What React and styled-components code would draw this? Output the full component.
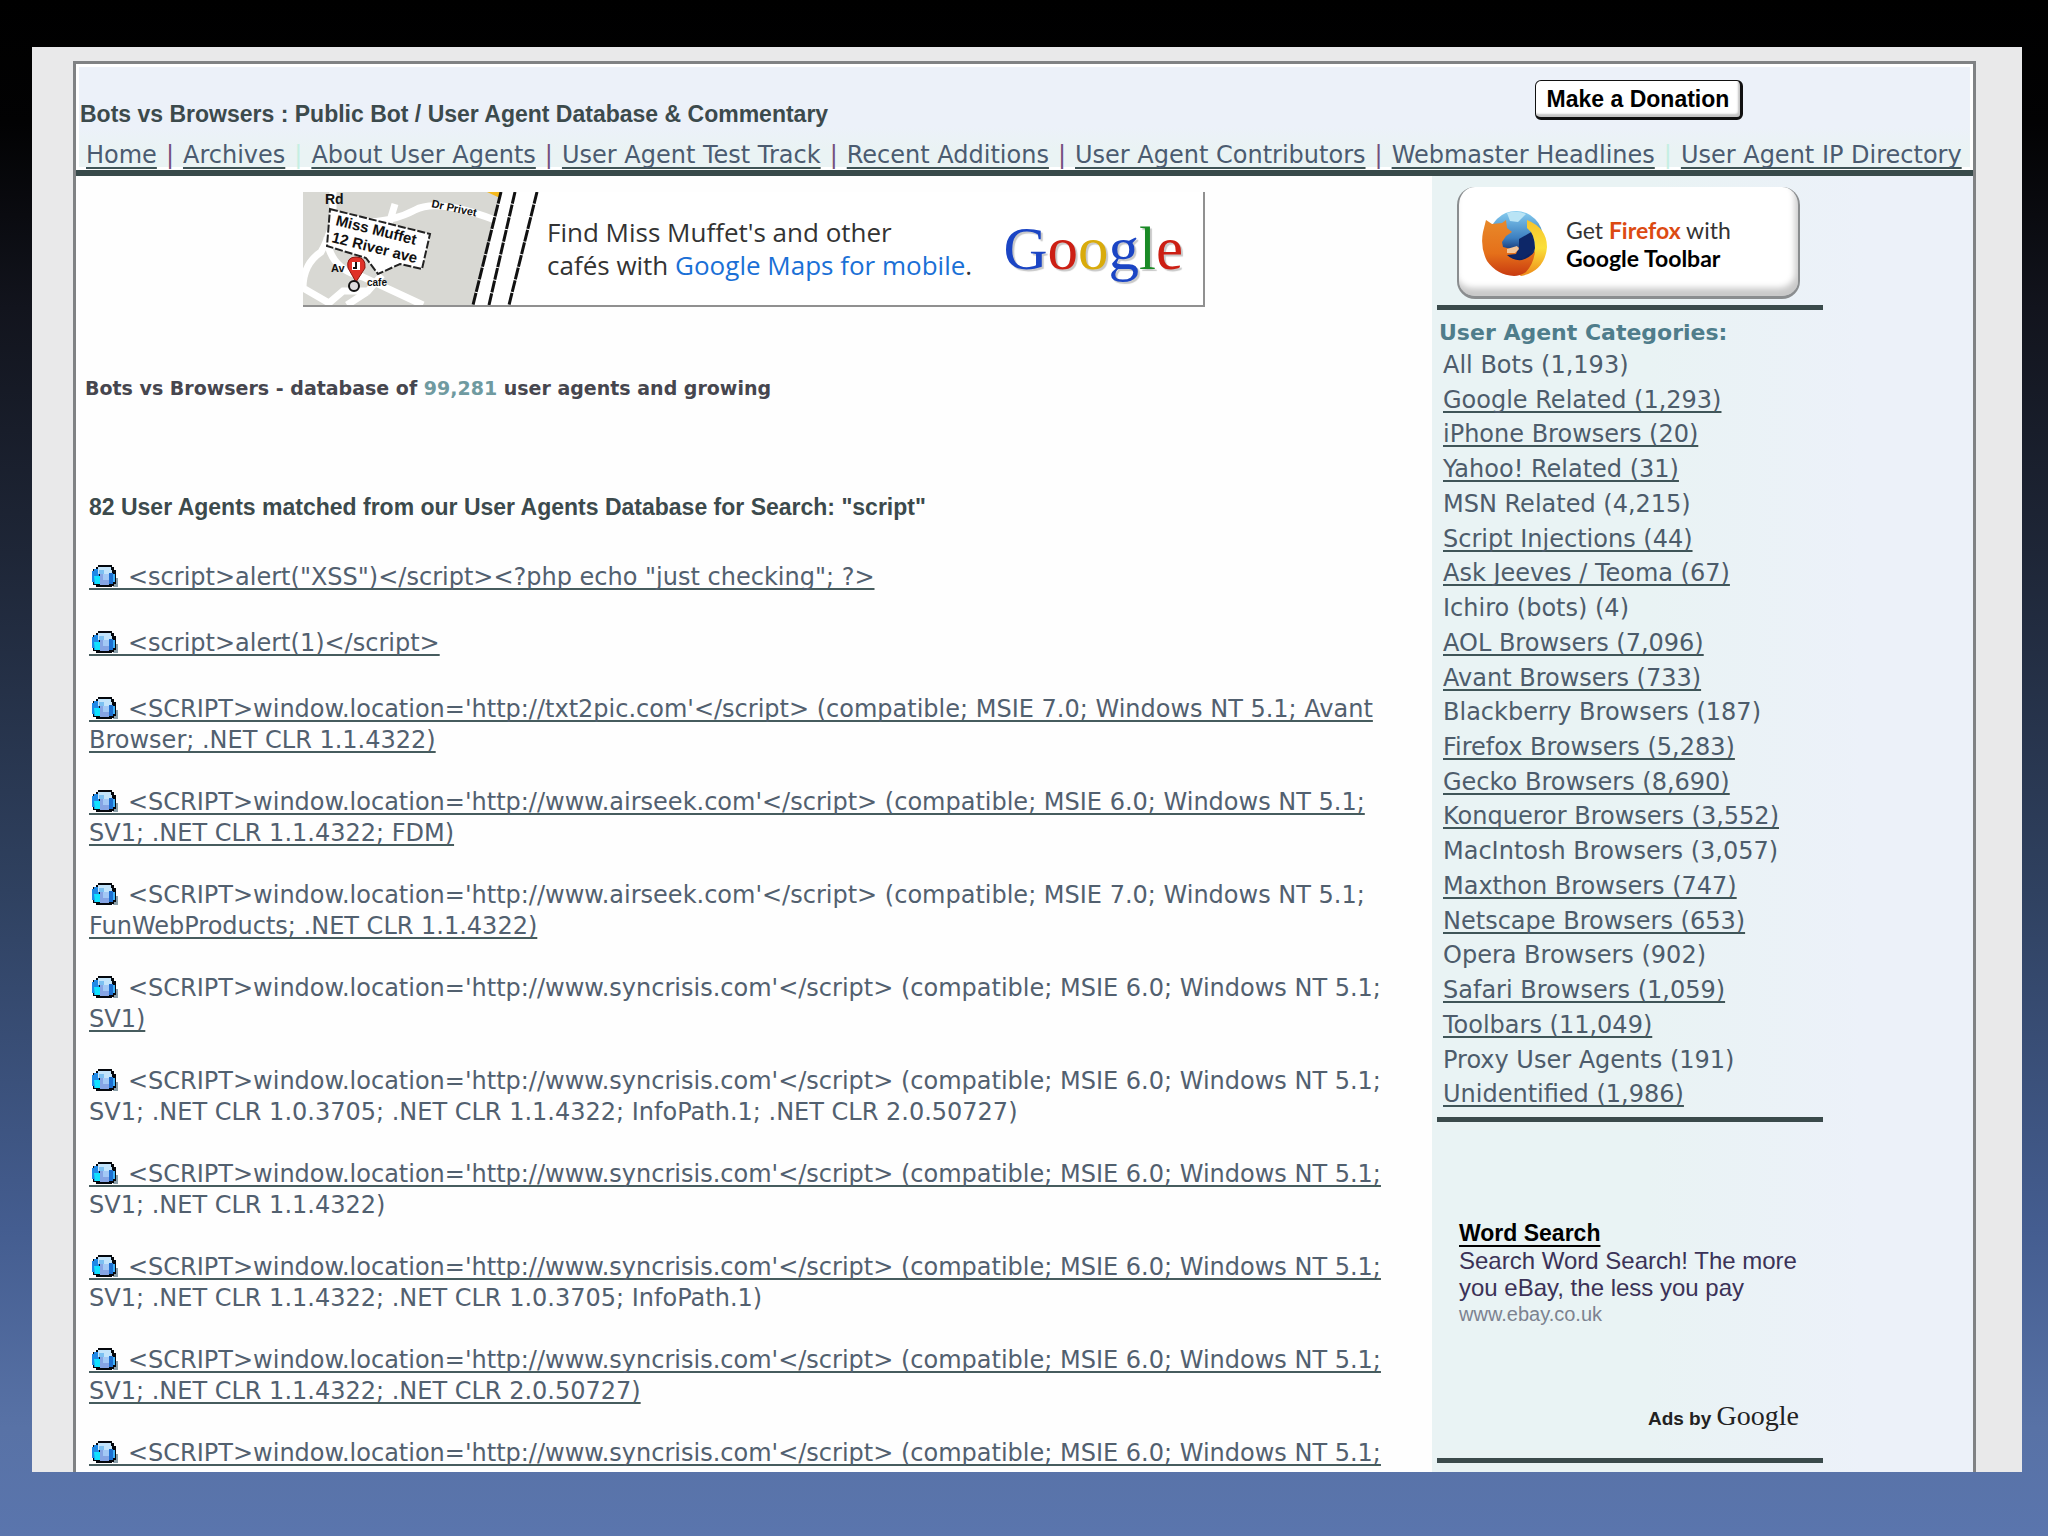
import React from 'react';
import styled, { createGlobalStyle } from 'styled-components';

const navLinks = [
	'Home',
	'Archives',
	'About User Agents',
	'User Agent Test Track',
	'Recent Additions',
	'User Agent Contributors',
	'Webmaster Headlines',
	'User Agent IP Directory',
];

const airseek =
	"<SCRIPT>window.location='http://www.airseek.com'</script> (compatible; MSIE ";
const syncrisis =
	"<SCRIPT>window.location='http://www.syncrisis.com'</script> (compatible; MSIE 6.0; Windows NT 5.1;";

// every entry is a list of lines: [text, underlined]
const agents = [
	[['<script>alert("XSS")</script><?php echo "just checking"; ?>', true]],
	[['<script>alert(1)</script>', true]],
	[
		[
			"<SCRIPT>window.location='http://txt2pic.com'</script> (compatible; MSIE 7.0; Windows NT 5.1; Avant",
			true,
		],
		['Browser; .NET CLR 1.1.4322)', true],
	],
	[
		[airseek + '6.0; Windows NT 5.1;', true],
		['SV1; .NET CLR 1.1.4322; FDM)', true],
	],
	[
		[airseek + '7.0; Windows NT 5.1;', false],
		['FunWebProducts; .NET CLR 1.1.4322)', true],
	],
	[
		[syncrisis, false],
		['SV1)', true],
	],
	[
		[syncrisis, false],
		[
			'SV1; .NET CLR 1.0.3705; .NET CLR 1.1.4322; InfoPath.1; .NET CLR 2.0.50727)',
			false,
		],
	],
	[
		[syncrisis, true],
		['SV1; .NET CLR 1.1.4322)', false],
	],
	[
		[syncrisis, true],
		['SV1; .NET CLR 1.1.4322; .NET CLR 1.0.3705; InfoPath.1)', false],
	],
	[
		[syncrisis, true],
		['SV1; .NET CLR 1.1.4322; .NET CLR 2.0.50727)', true],
	],
	[
		[syncrisis, true],
		['SV1; .NET CLR 1.1.4322; InfoPath.1)', true],
	],
];

const categories = [
	['All Bots (1,193)', false],
	['Google Related (1,293)', true],
	['iPhone Browsers (20)', true],
	['Yahoo! Related (31)', true],
	['MSN Related (4,215)', false],
	['Script Injections (44)', true],
	['Ask Jeeves / Teoma (67)', true],
	['Ichiro (bots) (4)', false],
	['AOL Browsers (7,096)', true],
	['Avant Browsers (733)', true],
	['Blackberry Browsers (187)', false],
	['Firefox Browsers (5,283)', true],
	['Gecko Browsers (8,690)', true],
	['Konqueror Browsers (3,552)', true],
	['MacIntosh Browsers (3,057)', false],
	['Maxthon Browsers (747)', true],
	['Netscape Browsers (653)', true],
	['Opera Browsers (902)', false],
	['Safari Browsers (1,059)', true],
	['Toolbars (11,049)', true],
	['Proxy User Agents (191)', false],
	['Unidentified (1,986)', true],
];

const GlobeIcon = ({ underlined }) => (
	<Globe
		viewBox="0 0 27 22"
		preserveAspectRatio="xMinYMin meet"
		aria-hidden="true"
		$underlined={underlined}
	>
		<path d="M25 13h2v9h-5z" fill="#8a9ea8" />
		<path d="M7 0h14v2h2v3h2v14h-2v2h-2v1H5v-2H2V4h3V2h2z" fill="#05080d" />
		<path d="M1 6h2V4h5v15H3v-2H1z" fill="#2089e6" />
		<path d="M3 11h6v8H4z" fill="#10e2ff" />
		<path d="M7 2h13v3h1v4H7z" fill="#c3e4fb" />
		<path d="M8 5h5v4H8z" fill="#7cc0f2" />
		<path d="M9 9h9v11H9z" fill="#86a4e4" />
		<path d="M12 9h6v6h-6z" fill="#a3c8f5" />
		<path d="M18 8h4v11h-4z" fill="#1d6fd0" />
		<path d="M22 9h2v8h-2z" fill="#3fb1fa" />
	</Globe>
);

const MapArt = () => (
	<Map viewBox="0 0 240 113" aria-hidden="true">
		<path d="M0 0h197l-28 113H0z" fill="#d8d8d3" />
		<g fill="none" stroke="#fff" strokeWidth="7">
			<path d="M30 0v30q-6 20-12 30Q0 72 0 96l26 15 14-12h25l14-16" />
			<path d="M24 45q2 32 36 40l60 28M60 30q30 0 52-12t80 10M92 12l-6 20M64 100l-20 13" />
		</g>
		<path
			d="M27 17l100 25-8 35-22-5-22 10-12-16-39-12z"
			fill="#fff"
			stroke="#222"
			strokeWidth="2"
			strokeDasharray="8 2"
		/>
		<path d="M184 0h13v6z" fill="#f5b91c" />
		<path d="M176 113L203 0h32l-28 113z" fill="#fff" />
		<path
			d="M198 0l-28 113M212 0l-26 113M234 0l-28 113"
			fill="none"
			stroke="#111"
			strokeWidth="3"
			strokeDasharray="12 1"
		/>
		<g
			fill="#111"
			fontFamily="'Liberation Sans', sans-serif"
			fontWeight="700"
			fontSize="15"
		>
			<text x="32" y="33" transform="rotate(14 32 33)">Miss Muffet</text>
			<text x="28" y="50" transform="rotate(14 28 50)">12 River ave</text>
			<text x="22" y="12" fontSize="14">Rd</text>
			<text x="28" y="80" fontSize="11">Av</text>
			<text x="64" y="94" fontSize="10">cafe</text>
			<text x="128" y="15" fontSize="11" transform="rotate(12 128 15)">
				Dr Privet
			</text>
		</g>
		<path
			d="M53 90l-8-14q-2-11 8-11t9 11z"
			fill="#e03128"
			stroke="#8c1710"
		/>
		<path d="M49 70h8v8h-8z" fill="#fff" />
		<path d="M53 70v6h-3" fill="none" stroke="#111" strokeWidth="2" />
		<circle cx="51" cy="94" r="5" fill="#ddd" stroke="#111" strokeWidth="2" />
	</Map>
);

const FirefoxIcon = () => (
	<Fox viewBox="0 0 66 66" aria-hidden="true">
		<defs>
			<linearGradient id="sky" x1="0" y1="0" x2="0" y2="1">
				<stop offset="0" stopColor="#86cdf0" />
				<stop offset="0.5" stopColor="#3c7fc0" />
				<stop offset="0.8" stopColor="#0c2260" />
			</linearGradient>
			<linearGradient id="fur" x1="0" y1="0" x2="0" y2="1">
				<stop offset="0" stopColor="#e8892a" />
				<stop offset="0.6" stopColor="#e5701a" />
				<stop offset="1" stopColor="#c83a10" />
			</linearGradient>
			<linearGradient id="tail" x1="0" y1="0" x2="0" y2="1">
				<stop offset="0" stopColor="#f6c32c" />
				<stop offset="0.5" stopColor="#fbe03a" />
				<stop offset="1" stopColor="#ee8a1a" />
			</linearGradient>
		</defs>
		<circle cx="35" cy="27" r="27" fill="url(#sky)" />
		<path d="M26 2q10-3 19 1l-8 8-8-1z" fill="#b9e4f5" />
		<path d="M38 28l14-8 2 18-12 10-14-1 10-8z" fill="#0d2768" />
		<path
			d="M46 9q20 8 20 27-2 24-26 29l-8-6q20-6 22-22 0-14-8-20z"
			fill="url(#tail)"
		/>
		<path
			d="M5 9l6 4 10-1 4-3 1 8 5 4-6 4-4 6 1 5 8 2 8-2-3 7-9 1q6 6 15 5 8-2 13-9-1 12-9 21-6 4-12 4-17-1-27-15-7-14-4-29z"
			fill="url(#fur)"
		/>
		<path d="M26 38l10-3 2 3-4 4h-8z" fill="#f3c69a" />
	</Fox>
);

const App = () => {
	return (
		<>
			<GlobalStyle />
			<Slide>
				<Panel>
					<Page>
						<Header>
							<TopRow>
								<SiteTitle>
									Bots vs Browsers : Public Bot / User Agent Database &amp;
									Commentary
								</SiteTitle>
								<DonateButton type="button">Make a Donation</DonateButton>
							</TopRow>
							<Nav>
								{navLinks.map((name, index) => (
									<React.Fragment key={name}>
										{index > 0 && (
											<Divider $pale={index === 2 || index === 7}>|</Divider>
										)}
										<NavLink href="#">{name}</NavLink>
									</React.Fragment>
								))}
							</Nav>
						</Header>
						<Columns>
							<Main>
								<Banner>
									<MapArt />
									<BannerText>
										Find Miss Muffet's and other
										<br />
										cafés with <a href="#">Google Maps for mobile</a>.
									</BannerText>
									<GoogleLogo>
										<Letter $color="#1b45c4">G</Letter>
										<Letter $color="#cc1f14">o</Letter>
										<Letter $color="#d9ab0c">o</Letter>
										<Letter $color="#1b45c4">g</Letter>
										<Letter $color="#1a8a26">l</Letter>
										<Letter $color="#cc1f14">e</Letter>
									</GoogleLogo>
								</Banner>
								<Tagline>
									Bots vs Browsers - database of <b>99,281</b> user agents and
									growing
								</Tagline>
								<ResultTitle>
									82 User Agents matched from our User Agents Database for
									Search: "script"
								</ResultTitle>
								<AgentList>
									{agents.map((lines, index) => (
										<Agent key={index}>
											<a href="#">
												{lines.map(([text, underlined], i) => (
													<AgentLine key={i}>
														{i === 0 && <GlobeIcon underlined={underlined} />}
														<AgentText $underlined={underlined}>
															{text}
														</AgentText>
													</AgentLine>
												))}
											</a>
										</Agent>
									))}
								</AgentList>
							</Main>
							<Sidebar>
								<FirefoxBadge href="#">
									<FirefoxIcon />
									<span>
										Get <Orange>Firefox</Orange> with
										<br />
										<b>Google Toolbar</b>
									</span>
								</FirefoxBadge>
								<Rule />
								<CategoryTitle>User Agent Categories:</CategoryTitle>
								<CategoryList>
									{categories.map(([name, underlined]) => (
										<li key={name}>
											<CategoryLink href="#" $underlined={underlined}>
												{name}
											</CategoryLink>
										</li>
									))}
								</CategoryList>
								<Rule />
								<Ad>
									<AdTitle href="#">Word Search</AdTitle>
									<AdCopy>
										Search Word Search! The more
										<br />
										you eBay, the less you pay
									</AdCopy>
									<AdSite>www.ebay.co.uk</AdSite>
									<AdsBy>
										Ads by <span>Google</span>
									</AdsBy>
								</Ad>
								<Rule />
							</Sidebar>
						</Columns>
					</Page>
				</Panel>
			</Slide>
		</>
	);
};

const GlobalStyle = createGlobalStyle`
	* {
		box-sizing: border-box;
	}

	body {
		margin: 0;
		font-family: 'DejaVu Sans', sans-serif;
		color: #3c4a4c;
	}

	a {
		color: inherit;
		text-decoration: none;
	}

	h1, h2, p, ul {
		margin: 0;
		padding: 0;
		list-style: none;
	}
`;

const Slide = styled.div`
	display: flex;
	height: 100vh;
	padding: 47px 26px 64px 32px;
	background: linear-gradient(
		#000 0%,
		#020203 8%,
		#12141d 20%,
		#1e2637 36%,
		#2f4160 58%,
		#445d90 80%,
		#5872a6 93%,
		#5a75ad 100%
	);
`;

const Panel = styled.div`
	flex: 1;
	display: flex;
	min-width: 0;
	overflow: hidden;
	padding: 14px 46px 0 41px;
	background: #e9e9ea;
`;

const Page = styled.div`
	flex: 1;
	min-width: 0;
	border: 3px solid #808284;
	border-bottom: 0;
	background: #fefefe;
`;

const Header = styled.header`
	height: 112px;
	overflow: hidden;
	border-bottom: 6px solid #384a4a;
	background: linear-gradient(#ecf1f9 60%, #eaf3f4 80%);
	box-shadow: inset 0 0 0 3px #fff;
`;

const TopRow = styled.div`
	display: flex;
	justify-content: space-between;
	align-items: flex-end;
	height: 64px;
	padding: 0 230px 0 4px;
`;

const SiteTitle = styled.h1`
	font: bold 23px/28px 'Liberation Sans', sans-serif;
	white-space: nowrap;
`;

const DonateButton = styled.button`
	width: 208px;
	height: 40px;
	margin-bottom: 8px;
	padding: 0;
	border: solid #111;
	border-width: 1px 3px 3px 1px;
	border-radius: 6px;
	background: #fff;
	box-shadow: inset -2px -3px 2px #c4c4c4;
	color: #000;
	font: bold 23px/32px 'Liberation Sans', sans-serif;
	white-space: nowrap;
`;

const Nav = styled.nav`
	display: flex;
	gap: 9px;
	padding: 12px 0 0 10px;
	font-size: 24px;
	line-height: 30px;
	white-space: nowrap;
	color: #4b5b70;
`;

const NavLink = styled.a`
	text-decoration: underline;
	text-decoration-color: #3f5355;
	text-decoration-thickness: 2px;
	text-underline-offset: 4px;
	text-decoration-skip-ink: none;
`;

const Divider = styled.span`
	color: ${(props) => (props.$pale ? '#c5efe2' : '#74507e')};
`;

const Columns = styled.div`
	display: flex;
`;

const Main = styled.main`
	flex: 1;
	min-width: 0;
	padding: 16px 32px 0 9px;
`;

const Banner = styled.div`
	display: flex;
	align-items: center;
	width: 902px;
	height: 115px;
	margin-left: 218px;
	border: solid #909090;
	border-width: 0 2px 2px 0;
	background: #fff;
`;

const Map = styled.svg`
	flex: none;
	width: 240px;
	height: 113px;
`;

const BannerText = styled.p`
	flex: 1;
	padding-left: 4px;
	font: 26px/33px 'Open Sans', sans-serif;
	color: #333;
	white-space: nowrap;

	a {
		color: #1a70d6;
	}
`;

const GoogleLogo = styled.div`
	padding-right: 20px;
	font: 61px/80px 'Liberation Serif', serif;
	text-shadow: 2px 2px 1px #c8c8c8;
`;

const Letter = styled.span`
	color: ${(props) => props.$color};
`;

const Tagline = styled.p`
	margin-top: 68px;
	font-size: 19px;
	font-weight: bold;
	line-height: 26px;
	white-space: nowrap;
	color: #46464e;

	b {
		color: #6f9aa0;
	}
`;

const ResultTitle = styled.h2`
	margin: 92px 0 0 4px;
	font: bold 23px/28px 'Liberation Sans', sans-serif;
	white-space: nowrap;
`;

const AgentList = styled.ul`
	padding-top: 41px;
	margin-left: 4px;
`;

const Agent = styled.li`
	min-height: 35px;
	margin-bottom: 31px;
	font-size: 24px;
	line-height: 31px;
	white-space: nowrap;
	color: #52606f;
`;

const AgentLine = styled.span`
	display: block;
	height: 31px;
`;

const AgentText = styled.span`
	text-decoration: ${(props) => (props.$underlined ? 'underline' : 'none')};
	text-decoration-color: #465c5e;
	text-decoration-thickness: 2px;
	text-underline-offset: 3px;
	text-decoration-skip-ink: none;
`;

// the border carries the underline of the link on below the icon
const Globe = styled.svg`
	width: 39px;
	height: 25px;
	padding: 0 10px 1px 2px;
	border-bottom: 2px solid
		${(props) => (props.$underlined ? '#465c5e' : 'transparent')};
	vertical-align: -5px;
`;

const Sidebar = styled.aside`
	flex: none;
	width: 541px;
	height: 1320px;
	padding: 11px 150px 0 5px;
	background: linear-gradient(90deg, #e9f3f4 40%, #ecf1f9 80%);
`;

const FirefoxBadge = styled.a`
	display: flex;
	align-items: center;
	gap: 19px;
	width: 343px;
	height: 112px;
	margin: 0 0 6px 20px;
	padding: 4px 0 0 22px;
	border: solid #8a8d8f;
	border-width: 0 2px 3px;
	border-radius: 18px;
	background: #fff;
	box-shadow: inset -3px -8px 6px #c9c9c9;
	color: #333;
	font: 23px/28px Lato, sans-serif;
	white-space: nowrap;

	b {
		color: #000;
	}
`;

const Fox = styled.svg`
	flex: none;
	width: 66px;
	height: 66px;
`;

const Orange = styled.span`
	color: #dc4a12;
	font-weight: bold;
`;

const Rule = styled.div`
	height: 5px;
	background: #3a4a4b;
`;

const CategoryTitle = styled.h2`
	padding: 6px 0 0 2px;
	font-size: 22px;
	line-height: 33px;
	white-space: nowrap;
	color: #4f7d8b;
`;

const CategoryList = styled.ul`
	display: grid;
	grid-auto-rows: 1fr;
	height: 764px;
	margin-bottom: 4px;
	padding-left: 6px;
	font-size: 24px;
	line-height: 33px;
	white-space: nowrap;
	color: #4d5c6b;
`;

const CategoryLink = styled.a`
	text-decoration: ${(props) => (props.$underlined ? 'underline' : 'none')};
	text-decoration-color: #3f5558;
	text-decoration-thickness: 2px;
	text-underline-offset: 3px;
	text-decoration-skip-ink: none;
`;

const Ad = styled.section`
	display: flex;
	flex-direction: column;
	align-items: flex-start;
	height: 336px;
	padding: 98px 24px 0 22px;
	font: 24px/27px 'Liberation Sans', sans-serif;
	white-space: nowrap;
	color: #3b3257;
`;

const AdTitle = styled.a`
	font-size: 23px;
	font-weight: bold;
	color: #000;
	text-decoration: underline;
	text-decoration-thickness: 2px;
	text-underline-offset: 4px;
`;

const AdCopy = styled.p``;

const AdSite = styled.p`
	font-size: 20px;
	color: #7c8290;
`;

const AdsBy = styled.p`
	margin-top: 73px;
	align-self: flex-end;
	font-size: 19px;
	font-weight: bold;
	line-height: 30px;
	color: #222;

	span {
		font: 28px/30px 'Liberation Serif', serif;
	}
`;

export default App;
